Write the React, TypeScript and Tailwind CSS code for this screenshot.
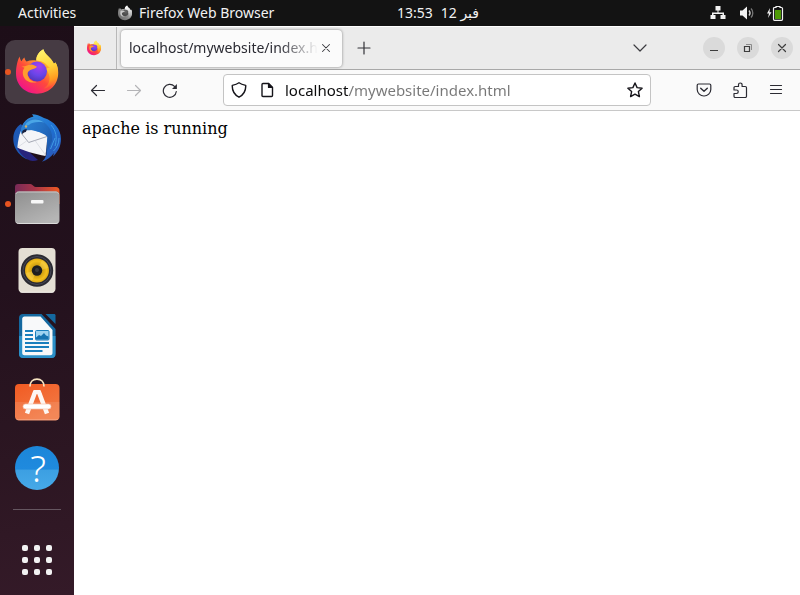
import type { ReactNode } from "react";

const UI_FONT = "font-['Noto_Sans','DejaVu_Sans',sans-serif]";

function FirefoxLogo({ id, className, mono = false }: { id: string; className: string; mono?: boolean }) {
  return (
    <svg viewBox="0 0 48 48" className={className} aria-hidden="true">
      <defs>
        <linearGradient id={`${id}-body`} x1="0.85" y1="0.1" x2="0.2" y2="0.95">
          <stop offset="0" stopColor={mono ? "#f2f2f2" : "#fff44f"} />
          <stop offset="0.3" stopColor={mono ? "#bdbdbd" : "#ffa42a"} />
          <stop offset="0.58" stopColor={mono ? "#8c8c8c" : "#ff4a3a"} />
          <stop offset="1" stopColor={mono ? "#6e6e6e" : "#f0128c"} />
        </linearGradient>
        <linearGradient id={`${id}-flame`} x1="0.4" y1="0" x2="0.6" y2="1">
          <stop offset="0" stopColor={mono ? "#ffffff" : "#fff36b"} />
          <stop offset="0.45" stopColor={mono ? "#dddddd" : "#ffd43a"} />
          <stop offset="0.8" stopColor={mono ? "#b0b0b0" : "#ff9a1f"} />
          <stop offset="1" stopColor={mono ? "#909090" : "#ff5a35"} stopOpacity="0.4" />
        </linearGradient>
        <radialGradient id={`${id}-globe`} cx="0.6" cy="0.25" r="0.9">
          <stop offset="0" stopColor={mono ? "#6a6a6a" : "#a63ff0"} />
          <stop offset="0.5" stopColor={mono ? "#505050" : "#6a45e8"} />
          <stop offset="1" stopColor={mono ? "#444444" : "#4a2fa8"} />
        </radialGradient>
      </defs>
      <path
        fill={`url(#${id}-body)`}
        d="M30.3 1.3c.8 3.4 3.6 5.4 6.6 8.6 1.9 2 3.2 4 4 5.9l1.6-1.3c2 3 2.8 6.600 2.700 10.600C45.200 37 36 45.700 24 45.700S3 37 3 25.500C3 19 4.500 12.500 6.600 8.600c.2 1.600.8 3.400 2 4.700.8-1.800 1.600-3 2.900-3.800.2 1.800.9 3 2.100 3.900 3-1.300 6.500-1.500 9.700-.8-.3-4.800 3-9 7-11.300z"
      />
      <circle cx="24" cy="23.500" r="10" fill={`url(#${id}-globe)`} />
      <path
        fill={`url(#${id}-flame)`}
        d="M30.300 1.300c.8 3.400 3.600 5.400 6.600 8.600 1.900 2 3.200 4 4 5.900l1.600-1.300c2.500 4 3 9 1.700 14C42 36 36 40 30.500 40.500c4.500-2.500 6.500-7 6-11.500-.4-4-2.500-5.500-3-8.500l3.500-1c-2.500-1.200-3.500-3.800-6.500-5.300-2.300-1.200-5-1-7.200-1.600-.3-4.800 3-9 7-11.300z"
      />
      <path
        fill={mono ? "#c9c9c9" : "#ff9d2e"}
        d="M8.500 18.500c4 .4 7-2.200 10-2 1.800.1 3.400 1.300 5.500 2.300-.9 1.700-3.500 2.200-5.300 2.700-2.700.9-4 2.300-4.200 4.400.8 5 4.500 8 9.500 8-5 2-12.500-.5-14-7-.6-3.200 0-5.500 1.500-7.200-1.100-.5-2.200-.8-3-1.200z"
      />
    </svg>
  );
}

function ThunderbirdIcon() {
  return (
    <svg viewBox="0 0 48 48" className="size-12" aria-hidden="true">
      <defs>
        <linearGradient id="tb-blue" x1="0.2" y1="0" x2="0.8" y2="1">
          <stop offset="0" stopColor="#2f8fdc" />
          <stop offset="0.5" stopColor="#1f6fd0" />
          <stop offset="1" stopColor="#2a56b8" />
        </linearGradient>
        <linearGradient id="tb-head" x1="0" y1="0" x2="1" y2="0.6">
          <stop offset="0" stopColor="#2f86d6" />
          <stop offset="0.6" stopColor="#2470c4" />
          <stop offset="1" stopColor="#1d5cb0" />
        </linearGradient>
      </defs>
      <path fill="#1d59b5" d="M8 10C2 14-.5 20 .5 28c1 8 7 14.500 14 17.500l-5-9 3-20z" />
      <path fill="#27247c" d="M4 33c3 7 7 11 13 13.500 2 .7 5 .5 8-.5L14 36z" />
      <path
        fill="url(#tb-blue)"
        d="M8 20C8 11 12 4.500 20.500 2.500L19 .2c4 .3 8 1.300 12 3.800C41 7 48 15 48 25c0 7-3 13-8 17.500L41 39c-3 4-7 7-12 8.800 2-2 3.500-4 4.300-7L34 23z"
      />
      <path fill="#f4f5f8" d="M7.700 17.500C9 15.500 13 15 18 16l13 3 3.500 3.500L32.500 42C22 40 10 36.500 4.300 33.500 5 27 6 21 7.700 17.500z" />
      <path fill="none" stroke="#a4a8b4" strokeWidth="1" d="m8 19 7.700 9.500L34 22.500" />
      <path fill="none" stroke="#d5d8de" strokeWidth="0.800" d="M13.500 27 5 33M22 26.500 32.500 41" />
      <path
        fill="url(#tb-head)"
        d="M8 20C7.500 11 12 5 19 4.500c8-.5 14 4 18 10.500 2 4 2.500 8 2 12l-4 9-1.500 2.500L34.500 23c-3-3.500-8-4.500-12.500-6.500-3-1.200-6 0-8.500-.2C11 16.500 9 18 8 20z"
      />
      <path fill="#4aa6e6" d="M13 9.500c5-5.500 13-5 18-1-6-1-12-.5-15 2.500l-4 1z" />
      <path fill="#17203e" d="M9 18c1-2.500 3-3.200 5-2.500l-1.200 2.500c-1.500.3-2.800 1-3.500 2.500z" />
      <circle cx="13" cy="12.500" r="1.200" fill="#d3b06a" />
      <path fill="none" stroke="#3f9ae3" strokeWidth="1" d="M38 11c5 6 6.500 12 4 21M42 24l-4.500 11M46 24c0 6-2.500 10-5.500 13" />
    </svg>
  );
}

function FilesIcon() {
  return (
    <svg viewBox="0 0 48 48" className="size-12" aria-hidden="true">
      <defs>
        <linearGradient id="files-back" x1="0" x2="1">
          <stop offset="0" stopColor="#782a57" />
          <stop offset="0.45" stopColor="#a83548" />
          <stop offset="1" stopColor="#ef5a23" />
        </linearGradient>
        <linearGradient id="files-front" x1="0" y1="0" x2="0.6" y2="1">
          <stop offset="0" stopColor="#8f8f8f" />
          <stop offset="1" stopColor="#b5b5b5" />
        </linearGradient>
      </defs>
      <path
        fill="url(#files-back)"
        d="M5 4h12.500c2 0 3 3 5 3H43c2 0 3.500 1.500 3.500 3.500V24H2V7c0-2 1-3 3-3z"
      />
      <rect x="2" y="11.500" width="44.500" height="32.500" rx="4" fill="url(#files-front)" />
      <path d="M3 14c.5-1.300 1.300-2 2.500-2H43c1.200 0 2 .7 2.500 2" fill="none" stroke="#c6c6c6" />
      <path d="M3.500 42.500c.5.700 1.200 1 2 1H43c.8 0 1.500-.4 2-1" fill="none" stroke="#dcdcdc" />
      <rect x="18" y="20" width="12.500" height="3.500" rx="1" fill="#f7f7f7" />
    </svg>
  );
}

function RhythmboxIcon() {
  return (
    <svg viewBox="0 0 48 48" className="size-12" aria-hidden="true">
      <defs>
        <radialGradient id="rb-cone">
          <stop offset="0.4" stopColor="#c99a10" />
          <stop offset="0.8" stopColor="#f4bf1c" />
          <stop offset="1" stopColor="#dba714" />
        </radialGradient>
      </defs>
      <rect x="5.500" y="2" width="37" height="44.500" rx="4" fill="#e4dfd4" />
      <path d="M7 45.500c.4.500 1 .8 2 .8h30c1 0 1.600-.3 2-.8" stroke="#f7f4ee" fill="none" />
      <circle cx="24" cy="24.500" r="16.200" fill="#2a2a31" />
      <circle cx="24" cy="24.500" r="14" fill="none" stroke="#464856" />
      <circle cx="24" cy="24.500" r="12" fill="url(#rb-cone)" />
      <path d="m24 24.500 5-10.500a11.700 11.700 0 0 1 6.500 8zM24 24.500l-5 10.500a11.700 11.700 0 0 1-6.500-8z" fill="#ffe06d" opacity="0.350" />
      <circle cx="24" cy="24.500" r="5.200" fill="#1e1e20" />
      <circle cx="24" cy="24" r="2" fill="#39393c" />
    </svg>
  );
}

function WriterIcon() {
  return (
    <svg viewBox="0 0 48 48" className="size-12" aria-hidden="true">
      <path fill="#14689f" d="M10 2h18.500l14 15v25c0 2.500-1.500 4-4 4H10c-2.500 0-4-1.500-4-4V6c0-2.500 1.500-4 4-4z" />
      <path fill="#2b90c8" d="M6 24h36.500v18c0 2.500-1.500 4-4 4H10c-2.500 0-4-1.500-4-4z" />
      <path fill="#f8f9fa" d="M11.500 4.500h16l12 13.500v23c0 1.300-1 2.300-2.300 2.300H11.500c-1.300 0-2.300-1-2.300-2.300V6.800c0-1.300 1-2.300 2.300-2.300z" />
      <path fill="#14689f" d="M32.500 2H41c1 0 1.500.6 1.500 1.500V12z" />
      <path stroke="#1a7fbd" strokeWidth="2" fill="none" d="M12 19h8M12 23h8M12 27h8M12 31h24M12 35h24M12 39h17.500" />
      <rect x="22.500" y="18.500" width="13.500" height="9.500" rx="1" fill="#9ed3f0" stroke="#1a7fbd" />
      <path fill="#1573b0" d="M23 27.500v-2l3-2.500 2 1 3-3 2 2.500 2.500 1v3z" />
    </svg>
  );
}

function SoftwareIcon() {
  return (
    <svg viewBox="0 0 48 48" className="size-12" aria-hidden="true">
      <defs>
        <linearGradient id="bag" x1="0" y1="0" x2="0.6" y2="1">
          <stop offset="0" stopColor="#f15a22" />
          <stop offset="1" stopColor="#f27a45" />
        </linearGradient>
      </defs>
      <rect x="2" y="6" width="44.500" height="36.200" rx="4" fill="url(#bag)" />
      <path d="M2 24h44.500v14.200c0 2.500-1.500 4-4 4H6c-2.500 0-4-1.500-4-4z" fill="#fff" opacity="0.100" />
      <path d="M3.500 41c.5.500 1.200.8 2 .8H43c.8 0 1.500-.3 2-.8" fill="none" stroke="#f6a583" />
      <path d="M17 8.500C17 4 20 1.200 24 1.200s7 2.800 7 7.300" fill="none" stroke="#f5e3c0" strokeWidth="1.800" />
      <path d="M22.500 13 14 35.500M25.500 13 34 35.500" fill="none" stroke="#fdf6f2" strokeWidth="4.500" />
      <path d="M21 12h6l1.500 4h-9z" fill="#fdf6f2" />
      <rect x="10" y="26" width="28" height="5" rx="2.500" fill="#fff" stroke="#f4c3ae" strokeWidth="0.700" />
    </svg>
  );
}

function HelpIcon() {
  return (
    <svg viewBox="0 0 48 48" className="size-12" aria-hidden="true">
      <defs>
        <linearGradient id="help-disc" x1="0" y1="0" x2="0" y2="1">
          <stop offset="0" stopColor="#1c86d9" />
          <stop offset="0.530" stopColor="#1f8ade" />
          <stop offset="0.540" stopColor="#3c9fe2" />
          <stop offset="1" stopColor="#46a9e8" />
        </linearGradient>
      </defs>
      <circle cx="24" cy="24" r="22" fill="url(#help-disc)" />
      <text x="25" y="38" textAnchor="middle" fontSize="37" fontWeight="300" fill="#fff" className={UI_FONT}>
        ?
      </text>
    </svg>
  );
}

function Line({ children, className = "size-4" }: { children: ReactNode; className?: string }) {
  return (
    <svg
      viewBox="0 0 16 16"
      className={className}
      fill="none"
      stroke="currentColor"
      strokeWidth="1.200"
      strokeLinecap="round"
      strokeLinejoin="round"
      aria-hidden="true"
    >
      {children}
    </svg>
  );
}

function TopBar() {
  return (
    <header className="grid h-[26px] shrink-0 grid-cols-[1fr_auto_1fr] items-center bg-[#131313] text-sm leading-5 text-[#f2f2f2]">
      <div className="flex items-center">
        <button className="w-[99px] pl-[18px] text-left">Activities</button>
        <button className="ml-[18px] flex items-center gap-1.5 whitespace-nowrap">
          <FirefoxLogo id="menu-firefox" mono className="size-4" />
          Firefox Web Browser
        </button>
      </div>
      <button className="flex gap-2 pl-[76px] whitespace-nowrap">
        <span>13:53</span>
        <span>12 فبر</span>
      </button>
      <div className="flex items-center justify-end gap-3 pr-4">
        <svg viewBox="0 0 16 16" className="size-4" fill="currentColor" role="img" aria-label="Wired network">
          <path d="M5.500 1h5v4.500h-2v2H14V10h1.500v4h-5v-4h2V9h-9v1h2v4h-5v-4H2V7.500h5.500v-2h-2z" />
        </svg>
        <svg viewBox="0 0 16 16" className="size-4" fill="none" role="img" aria-label="Volume">
          <path d="M2 5.500h2.500L9 1.500v13l-4.500-4H2z" fill="#f2f2f2" />
          <path d="M11 5.500c1.300 1.500 1.300 3.500 0 5" stroke="#d0d0d0" strokeWidth="1.300" />
          <path d="M13 3.500c2.400 2.500 2.400 6.500 0 9" stroke="#777" strokeWidth="1.300" />
        </svg>
        <svg viewBox="0 0 18 16" className="h-4 w-[18px]" fill="none" role="img" aria-label="Battery charging">
          <path d="M4 3 1 8.500h2L2 13l3.500-5.800h-2z" fill="#f2f2f2" />
          <path d="M10 1.500h4v1h1.500c.7 0 1 .3 1 1v10.800c0 .6-.3 1-1 1h-7c-.7 0-1-.4-1-1V3.500c0-.7.3-1 1-1H10z" stroke="#f2f2f2" strokeWidth="1.200" />
          <path d="M9 5h6v9H9z" fill="#4e9a06" />
        </svg>
      </div>
    </header>
  );
}

function DockItem({ label, active = false, running = false, children }: { label: string; active?: boolean; running?: boolean; children: ReactNode }) {
  return (
    <button
      aria-label={label}
      className={`relative flex size-16 items-center justify-center rounded-[10px] ${active ? "bg-[#463b43]" : ""}`}
    >
      {running && <span className="absolute top-[29px] left-0 size-1.5 rounded-full bg-[#e95420]" />}
      {children}
    </button>
  );
}

function Dock() {
  return (
    <nav
      aria-label="Dock"
      className="flex w-[74px] shrink-0 flex-col items-center gap-0.5 bg-[linear-gradient(170deg,#1d0e18_0%,#23111d_45%,#2c1622_75%,#341a28_100%)] pt-3.5"
    >
      <DockItem label="Firefox" active running>
        <FirefoxLogo id="dock-firefox" className="size-12" />
      </DockItem>
      <DockItem label="Thunderbird Mail">
        <ThunderbirdIcon />
      </DockItem>
      <DockItem label="Files" running>
        <FilesIcon />
      </DockItem>
      <DockItem label="Rhythmbox">
        <RhythmboxIcon />
      </DockItem>
      <DockItem label="LibreOffice Writer">
        <WriterIcon />
      </DockItem>
      <DockItem label="Ubuntu Software">
        <SoftwareIcon />
      </DockItem>
      <DockItem label="Help">
        <HelpIcon />
      </DockItem>
      <hr className="mt-[7px] w-12 border-0 border-t border-[#655660]" />
      <button aria-label="Show Applications" className="mt-auto mb-[3px] grid size-16 grid-cols-3 place-content-center gap-1.5 px-[17px]">
        {Array.from({ length: 9 }, (_, i) => (
          <span key={i} className="size-1.5 rounded-[2px] bg-[#f2f2f2]" />
        ))}
      </button>
    </nav>
  );
}

function WindowButton({ label, children }: { label: string; children: ReactNode }) {
  return (
    <button aria-label={label} className="flex size-[22px] items-center justify-center rounded-full bg-[#dadada] text-[#3d3d3d]">
      {children}
    </button>
  );
}

function TabStrip() {
  return (
    <div className="flex h-11 shrink-0 items-center border-t border-b border-t-white border-b-[#a8a8a8] bg-[#ebebeb]">
      <button aria-label="Pinned Firefox tab" className="flex w-[43px] items-center justify-center self-stretch border-r border-[#b8b8b8] pr-0.5">
        <FirefoxLogo id="pinned-firefox" className="size-4" />
      </button>
      <div className="ml-1 flex h-[37px] w-[221px] items-center rounded bg-[#fbfbfb] pl-2 shadow-[0_0_3px_rgba(0,0,0,0.450)]">
        <button className="w-[189px] overflow-hidden mask-r-from-[150px] mask-r-to-[189px] text-left text-sm leading-5 whitespace-nowrap text-[#2b2b33]">
          localhost/mywebsite/index.html
        </button>
        <button aria-label="Close tab" className="flex w-4 justify-center text-[#3b3b40]">
          <Line className="size-3.5">
            <path d="m4 4 8 8M12 4l-8 8" />
          </Line>
        </button>
      </div>
      <button aria-label="New tab" className="ml-1.5 flex size-8 items-center justify-center text-[#333338]">
        <Line>
          <path d="M8 2v12M2 8h12" />
        </Line>
      </button>
      <button aria-label="List all tabs" className="mr-[55px] ml-auto flex size-4 items-center justify-center text-[#3b3b40]">
        <Line>
          <path d="m2 5 6 6 6-6" />
        </Line>
      </button>
      <div className="flex gap-3 pr-[7px]">
        <WindowButton label="Minimize">
          <svg viewBox="0 0 16 16" className="size-4" fill="currentColor" aria-hidden="true">
            <path d="M4 10h8v1H4z" />
          </svg>
        </WindowButton>
        <WindowButton label="Restore">
          <svg viewBox="0 0 16 16" className="size-4" fill="none" stroke="currentColor" aria-hidden="true">
            <path d="M4.500 6.500h5v5h-5z" strokeWidth="1.200" />
            <path d="M6 4.500h5.500V10" stroke="#8a8a8a" />
          </svg>
        </WindowButton>
        <WindowButton label="Close">
          <Line>
            <path d="m4.500 4.500 7 7M11.500 4.500l-7 7" />
          </Line>
        </WindowButton>
      </div>
    </div>
  );
}

function ToolButton({ label, disabled = false, children }: { label: string; disabled?: boolean; children: ReactNode }) {
  return (
    <button aria-label={label} disabled={disabled} className="flex size-8 items-center justify-center text-[#2b2b33] disabled:text-[#b4b4b7]">
      {children}
    </button>
  );
}

function NavBar() {
  return (
    <div className="flex h-[41px] shrink-0 items-center border-b border-[#c8c8c8] bg-[#fafafa] px-2">
      <div className="flex gap-1">
        <ToolButton label="Back">
          <Line>
            <path d="M14.500 8.500H1.500M6.500 3.500l-5 5 5 5" />
          </Line>
        </ToolButton>
        <ToolButton label="Forward" disabled>
          <Line>
            <path d="M1.500 8.500h13M9.500 3.500l5 5-5 5" />
          </Line>
        </ToolButton>
        <ToolButton label="Reload">
          <Line>
            <path d="M14.300 9.500A6.500 6.500 0 1 1 12.500 4.300" />
            <path d="M14.900 2v4.900H10z" fill="currentColor" stroke="none" />
          </Line>
        </ToolButton>
      </div>
      <form
        className="mx-[37px] flex h-8 min-w-0 flex-1 items-center rounded border border-[#c4c4c4] bg-white px-[7px] text-[#15141a]"
        onSubmit={(event) => event.preventDefault()}
      >
        <button type="button" aria-label="Tracking protection" className="mr-3">
          <Line>
            <path strokeWidth="1.400" d="M8 .8c2 1.400 4 2 6.700 2.600.3 5-1.500 9-6.700 11.800C2.800 12.400 1 8.400 1.300 3.400 4 2.800 6 2.200 8 .8z" />
          </Line>
        </button>
        <button type="button" aria-label="Site information" className="mr-2.5">
          <Line>
            <path strokeWidth="1.400" d="M4 1.500h5.500L13.500 5.500v8c0 .6-.4 1-1 1H4c-.6 0-1-.4-1-1v-11c0-.6.4-1 1-1z" />
            <path fill="currentColor" d="M9.500 1.500v4h4z" />
          </Line>
        </button>
        <input
          aria-label="Address"
          defaultValue="localhost/mywebsite/index.html"
          className="min-w-0 flex-1 bg-[linear-gradient(to_right,#0c0c0d_64px,#777777_64px)] bg-clip-text text-[15px] leading-5 text-transparent caret-black outline-none"
        />
        <button type="button" aria-label="Bookmark this page">
          <Line>
            <path strokeWidth="1.400" d="m8 1 2.100 4.600 5 .6-3.700 3.400 1 5L8 12.100l-4.400 2.500 1-5L.9 6.200l5-.6z" />
          </Line>
        </button>
      </form>
      <div className="flex gap-1">
        <ToolButton label="Save to Pocket">
          <Line>
            <path d="M2.500 2h11c.8 0 1.300.5 1.300 1.300V7.500A6.700 6.700 0 0 1 8 14 6.700 6.700 0 0 1 1.200 7.500V3.300C1.200 2.500 1.700 2 2.500 2z" />
            <path d="M4.700 6.200 8 9.300l3.300-3.100" strokeWidth="1.400" />
          </Line>
        </ToolButton>
        <ToolButton label="Extensions">
          <Line>
            <path d="M6.500 4.500V2.800a1.800 1.800 0 0 1 3.600 0v1.700h3.200c.7 0 1.200.5 1.200 1.200v8.600c0 .7-.5 1.200-1.200 1.200H3.200c-.7 0-1.200-.5-1.200-1.200v-2.800h2.500a1.500 1.500 0 0 0 0-3.500H2V5.700c0-.7.500-1.200 1.200-1.200z" />
          </Line>
        </ToolButton>
        <ToolButton label="Open application menu">
          <Line>
            <path d="M2.500 3.500h11M2.500 7.500h11M2.500 11.500h11" />
          </Line>
        </ToolButton>
      </div>
    </div>
  );
}

export default function App() {
  return (
    <div className={`flex min-h-screen flex-col ${UI_FONT}`}>
      <TopBar />
      <div className="flex flex-1">
        <Dock />
        <div className="flex min-w-0 flex-1 flex-col bg-white">
          <TabStrip />
          <NavBar />
          <main className="p-2 font-['DejaVu_Serif',serif] text-base leading-[19px] text-black">
            <p>apache is running</p>
          </main>
        </div>
      </div>
    </div>
  );
}
